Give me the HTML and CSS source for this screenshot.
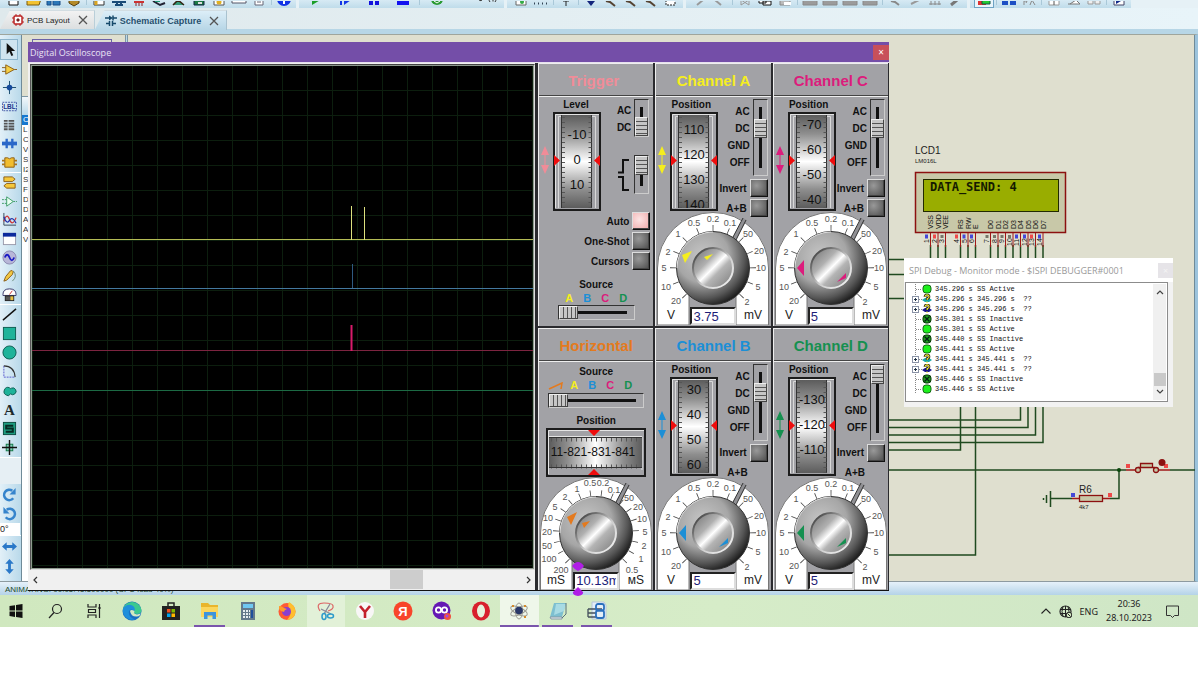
FILE: index.html
```html
<!DOCTYPE html>
<html lang="en">
<head>
<meta charset="utf-8">
<title>Schematic Capture</title>
<link rel="stylesheet" href="styles.css">
</head>
<body>
<svg class="defs" aria-hidden="true">
  <defs>
    <radialGradient id="knobFace" cx="0.36" cy="0.34" r="0.72">
      <stop offset="0" stop-color="#c6c6c6"/><stop offset="0.5" stop-color="#a6a6a6"/><stop offset="0.8" stop-color="#555"/><stop offset="1" stop-color="#141414"/>
    </radialGradient>
    <linearGradient id="knobCap" x1="0" y1="0" x2="1" y2="1">
      <stop offset="0.05" stop-color="#777"/><stop offset="0.35" stop-color="#b0b0b0"/><stop offset="0.5" stop-color="#fff"/><stop offset="0.62" stop-color="#b4b4b4"/><stop offset="0.95" stop-color="#808080"/>
    </linearGradient>
    <linearGradient id="knobRim" x1="0" y1="0" x2="1" y2="1">
      <stop offset="0.1" stop-color="#444"/><stop offset="0.55" stop-color="#ccc"/><stop offset="0.9" stop-color="#eee"/>
    </linearGradient>
    <linearGradient id="drumV" x1="0" y1="0" x2="0" y2="1">
      <stop offset="0" stop-color="#5c5c5c"/><stop offset="0.2" stop-color="#8e8e8e"/><stop offset="0.5" stop-color="#fff"/><stop offset="0.8" stop-color="#8e8e8e"/><stop offset="1" stop-color="#5c5c5c"/>
    </linearGradient>
    <linearGradient id="drumH" x1="0" y1="0" x2="1" y2="0">
      <stop offset="0" stop-color="#5c5c5c"/><stop offset="0.2" stop-color="#8e8e8e"/><stop offset="0.5" stop-color="#fff"/><stop offset="0.8" stop-color="#8e8e8e"/><stop offset="1" stop-color="#5c5c5c"/>
    </linearGradient>
    <symbol id="drum" viewBox="0 0 48 99">
      <rect x="1" y="1" width="46" height="97" fill="#a2a2a6" stroke="#1c1c1c" stroke-width="2"/>
      <path d="M2.500 96V2.500H46" fill="none" stroke="#e4e4e4"/>
      <path d="M5.500 96V4.500H42.500V96" fill="none" stroke="#d8d8d8"/>
      <rect x="8" y="3" width="31" height="93" fill="url(#drumV)"/>
      <path d="M8.500 3V96M38.500 3V96" stroke="#333"/>
      <path d="M10.500 5V96" stroke="#555" stroke-width="3" stroke-dasharray="1 4"/>
      <path d="M37 5V96" stroke="#555" stroke-width="3" stroke-dasharray="1 4"/>
      <path d="M1 43V54L7 48.500Z M47 43V54L41 48.500Z" fill="#f00d0d"/>
    </symbol>
    <symbol id="updown" viewBox="0 0 10 28">
      <path d="M5 0L9 9H1ZM5 28L9 19H1Z" fill="currentColor"/><path d="M5 8V20" stroke="currentColor"/>
    </symbol>
    <symbol id="plate" viewBox="0 0 112 113">
      <path d="M0.500 113V56A55.500 55.500 0 0 1 111.500 56V113H79V82H32V113Z" fill="#fff" stroke="#777"/>
      <path d="M76 29L88 7" stroke="#909094" stroke-width="4"/>
      <path d="M75 27L86 6M78 30L89 8" stroke="#333"/>
    </symbol>
    <symbol id="knob" viewBox="0 0 112 113">
      <circle cx="56" cy="56" r="36.500" fill="url(#knobFace)" stroke="#333"/>
      <path d="M20 56A36 36 0 0 1 56 20" fill="none" stroke="#ddd"/>
      <circle cx="56" cy="56" r="20" fill="url(#knobCap)" stroke="url(#knobRim)" stroke-width="2"/>
    </symbol>
    <symbol id="scale" viewBox="0 0 112 113">
      <path d="M27.700 84.300A40 40 0 1 1 84.300 84.300" pathLength="120" fill="none" stroke="#444" stroke-width="6" stroke-dasharray="0.500 9.460"/>
      <g class="scale-text">
        <text x="19" y="92">20</text><text x="9" y="78">10</text><text x="7" y="59">5</text><text x="11" y="43">2</text><text x="21" y="25">1</text><text x="37" y="14">0.5</text><text x="56" y="10">0.2</text><text x="73" y="14">0.1</text><text x="91" y="25">50</text><text x="102" y="42">20</text><text x="104" y="59">10</text><text x="101" y="78">5</text><text x="90" y="93">2</text>
      </g>
      <text class="unit-text" x="14" y="107">V</text><text class="unit-text" x="96" y="107">mV</text>
    </symbol>
    <symbol id="ptr" viewBox="0 0 112 113">
      <path d="M22 56L29 48V64Z" fill="currentColor"/><path d="M71 66L62 70L71 61Z" fill="currentColor"/>
    </symbol>
    <symbol id="q" viewBox="0 0 10 10">
      <path d="M0 6L3 4H7L10 6L7 8H3Z" fill="currentColor"/><path d="M3 3Q3 .800 5 .800Q7.200 1 7 3Q6.800 4.200 5.200 4.600V6" fill="none" stroke="#111" stroke-width="2.600"/><path d="M3 3Q3 .800 5 .800Q7.200 1 7 3Q6.800 4.200 5.200 4.600V6M5 7.500V9" fill="none" stroke="#f4ea3a" stroke-width="1.200"/>
    </symbol>
    <symbol id="on" viewBox="0 0 10 10"><rect x="1" y="1" width="8" height="8" rx="3" fill="#1cf01c" stroke="#156b15"/></symbol>
    <symbol id="off" viewBox="0 0 10 10"><rect x="1" y="1" width="8" height="8" rx="3" fill="#1f9c1f" stroke="#073807"/><path d="M2.500 2.500L7.500 7.500M7.500 2.500L2.500 7.500" stroke="#021" stroke-width="1.300"/></symbol>
    <symbol id="leaf" viewBox="0 0 12 10"><path d="M5.500 0V10M6 5.500H12" stroke="#888" stroke-dasharray="1 1"/></symbol>
    <symbol id="plus" viewBox="0 0 12 10"><path d="M5.500 0V10M9 5.500H12" stroke="#888" stroke-dasharray="1 1"/><rect x="2.500" y="2.500" width="6" height="6" fill="#fff" stroke="#8a93a6"/><path d="M4 5.500H7M5.500 4V7" stroke="#234"/></symbol>
  </defs>
</svg>

<div class="app">
  <div class="toolbar">
    <div class="tool-group">
      <button aria-label="New"><svg viewBox="0 0 16 6"><path d="M3 -4H12V4H3Z" fill="#fff" stroke="#111"/></svg></button>
      <button aria-label="Open"><svg viewBox="0 0 16 6"><path d="M1 -2H15L13 4H1Z" fill="#f2c230" stroke="#7a5c10"/></svg></button>
      <button aria-label="Save"><svg viewBox="0 0 16 6"><path d="M1 -2V4H5V-2M7 -2V4H14V-2" fill="#2b77b8" stroke="#1b4c86"/></svg></button>
      <button aria-label="Home"><svg viewBox="0 0 16 6"><path d="M3 -2V2L8 5L13 2V-2Z" fill="#b48a28" stroke="#553e10"/></svg></button>
      <i></i>
      <button aria-label="Board"><svg viewBox="0 0 16 6"><path d="M3 -2H13V4H3Z" fill="#fff" stroke="#333"/><path d="M5 0V4" stroke="#d9a520" stroke-width="3"/></svg></button>
      <button aria-label="Schematic"><svg viewBox="0 0 16 6"><path d="M1 1H15M4 4H12M6 0V5M10 0V5" stroke="#1b4c78" stroke-width="2"/></svg></button>
      <button aria-label="Layout"><svg viewBox="0 0 16 6"><path d="M3 -2H13V2H3Z" fill="#c33"/><path d="M5 2V5M8 2V5M11 2V5" stroke="#822" /></svg></button>
      <button aria-label="3D view"><svg viewBox="0 0 16 6"><path d="M2 0L9 4L14 2" fill="none" stroke="#223" stroke-width="2"/><path d="M4 0H9" stroke="#297" stroke-width="2"/></svg></button>
      <button aria-label="Gerber"><svg viewBox="0 0 16 6"><path d="M2 4L7 -1L13 4" fill="#397" stroke="#321" stroke-width="1.500"/></svg></button>
      <button aria-label="Explorer"><svg viewBox="0 0 16 6"><path d="M3 -2H13V4H3Z" fill="#1d7a43" stroke="#124"/><path d="M7 1H11V3H7Z" fill="#ddd"/></svg></button>
      <button aria-label="Bill"><svg viewBox="0 0 16 6"><path d="M3 -2H13V4H3Z" fill="#fff" stroke="#555"/><circle cx="8" cy="1" r="2.500" fill="#e0b020"/></svg></button>
      <button aria-label="Code"><svg viewBox="0 0 16 6"><path d="M1 -2H15V2H1Z" fill="#fff" stroke="#556"/></svg></button>
      <button aria-label="Notes"><svg viewBox="0 0 16 6"><path d="M4 -2H12V4H4Z" fill="#fff" stroke="#667"/><path d="M6 1H10" stroke="#667"/></svg></button>
      <i></i>
      <button aria-label="Help"><svg viewBox="0 0 16 6"><circle cx="8" cy="-2" r="7" fill="#1133e6"/><path d="M8 -2V3" stroke="#fff" stroke-width="2"/></svg></button>
    </div>
    <div class="tool-group wide">
      <button aria-label="Play"><svg viewBox="0 0 16 6"><path d="M4 -4V4L14 -2Z" fill="#1a9e28"/></svg></button>
      <button aria-label="Step"><svg viewBox="0 0 16 6"><path d="M4 -2V4" stroke="#1133e6" stroke-width="2"/><path d="M7 -4V4L14 -1Z" fill="#1133e6"/></svg></button>
      <button aria-label="Pause"><svg viewBox="0 0 16 6"><path d="M5 -2V4M11 -2V4" stroke="#1111dd" stroke-width="4"/></svg></button>
      <button aria-label="Stop"><svg viewBox="0 0 16 6"><path d="M2 -2H14V4H2Z" fill="#1111f0"/></svg></button>
      <i></i>
      <button aria-label="Messages"><svg viewBox="0 0 16 6"><circle cx="8" cy="-2" r="6" fill="#2a9a34"/><path d="M5 0L8 2L11 0" fill="none" stroke="#fff"/></svg></button>
      <svg class="counter" viewBox="0 0 51 6"><path d="M28 0Q30 2 32 -1M38 -1Q38 1 39 2M42 -1V1.500M45 -1Q45 1 44 2" fill="none" stroke="#333"/></svg>
    </div>
    <div class="tool-group">
      <button aria-label="Redraw"><svg viewBox="0 0 16 6"><path d="M3 -2H13V4H3Z" fill="#fff" stroke="#666"/><circle cx="9" cy="1" r="2" fill="#3a4"/></svg></button>
      <button aria-label="Grid"><svg viewBox="0 0 16 6"><path d="M1 2.500H16" stroke="#345" stroke-width="2" stroke-dasharray="1 3"/></svg></button>
      <i></i>
      <button aria-label="Origin"><svg viewBox="0 0 16 6"><path d="M8 -2V5M5 0H11" stroke="#222"/></svg></button>
      <i></i>
      <button aria-label="Pan"><svg viewBox="0 0 16 6"><path d="M4 0H12L8 5Z" fill="#13257c"/></svg></button>
      <button aria-label="Zoom in"><svg viewBox="0 0 16 6"><path d="M3 0L7 1L12 5" fill="none" stroke="#543" stroke-width="2"/></svg></button>
      <button aria-label="Zoom out"><svg viewBox="0 0 16 6"><path d="M3 0L7 1L12 5" fill="none" stroke="#543" stroke-width="2"/></svg></button>
      <button aria-label="Zoom all"><svg viewBox="0 0 16 6"><path d="M3 0L7 1L12 5" fill="none" stroke="#543" stroke-width="2"/></svg></button>
      <button aria-label="Zoom area"><svg viewBox="0 0 16 6"><path d="M3 -2H12V4H3Z" fill="#fff" stroke="#222" stroke-dasharray="2 1"/></svg></button>
    </div>
    <div class="tool-group">
      <button aria-label="Undo"><svg viewBox="0 0 16 6"><path d="M5 4L11 -1" stroke="#999" stroke-width="2"/></svg></button>
      <button aria-label="Redo"><svg viewBox="0 0 16 6"><path d="M3 -1L9 4" stroke="#999" stroke-width="2"/></svg></button>
      <i></i>
      <button aria-label="Cut"><svg viewBox="0 0 16 6"><path d="M4 4L12 -1M4 -1L12 4M4 0V4M12 0V4" stroke="#999"/></svg></button>
      <button aria-label="Copy"><svg viewBox="0 0 16 6"><path d="M2 -2H9V2H2ZM6 0H14V4H6Z" fill="#fff" stroke="#111"/></svg></button>
      <button aria-label="Paste"><svg viewBox="0 0 16 6"><path d="M3 -2H13V4H3Z" fill="#bbb" stroke="#888"/><path d="M7 1H14V4H7Z" fill="#fff"/></svg></button>
      <i></i>
      <button aria-label="Block copy"><svg viewBox="0 0 16 6"><path d="M1 -2H15V4H1Z" fill="#9b9b9b" stroke="#888"/></svg></button>
      <button aria-label="Block move"><svg viewBox="0 0 16 6"><path d="M1 -2H15V4H1Z" fill="#9b9b9b" stroke="#888"/></svg></button>
      <button aria-label="Block rotate"><svg viewBox="0 0 16 6"><path d="M1 -2H15V4H1Z" fill="#9b9b9b" stroke="#888"/></svg></button>
      <button aria-label="Block delete"><svg viewBox="0 0 16 6"><path d="M1 -2H15V4H1Z" fill="#9b9b9b" stroke="#888"/></svg></button>
      <i></i>
      <button aria-label="Pick"><svg viewBox="0 0 16 6"><path d="M4 0L8 1L12 4" fill="none" stroke="#888" stroke-width="2"/></svg></button>
      <button aria-label="Make device"><svg viewBox="0 0 16 6"><path d="M4 3L12 -1" stroke="#999" stroke-width="2"/></svg></button>
      <button aria-label="Packaging"><svg viewBox="0 0 16 6"><path d="M2 3H14M4 0V4M8 0V4M12 0V4" stroke="#888"/></svg></button>
      <button aria-label="Decompose"><svg viewBox="0 0 16 6"><path d="M4 4L10 -1" stroke="#777" stroke-width="3"/></svg></button>
    </div>
    <div class="tool-group">
      <button class="pressed" aria-label="Autorouter"><svg viewBox="0 0 16 6"><path d="M2 -2H10V4H2Z" fill="#d33"/><path d="M6 -2H14V3H6Z" fill="#2c3" stroke="#154"/></svg></button>
      <i></i>
      <button aria-label="Search"><svg viewBox="0 0 16 6"><path d="M1 2H7M9 2H15" stroke="#1d4fc4" stroke-width="4"/></svg></button>
      <button aria-label="Properties"><svg viewBox="0 0 16 6"><path d="M3 4V0H6L5 2M9 4L11 -1L14 4" fill="none" stroke="#888"/></svg></button>
      <i></i>
      <button aria-label="New sheet"><svg viewBox="0 0 16 6"><path d="M3 -2H13V4H3Z" fill="#fff" stroke="#999"/><path d="M8 0V4" stroke="#555"/></svg></button>
      <button aria-label="Remove sheet"><svg viewBox="0 0 16 6"><path d="M2 3H14L10 -1L4 3" fill="#fff" stroke="#777"/></svg></button>
      <button aria-label="Exit to parent"><svg viewBox="0 0 16 6"><path d="M2 -2H7V3H2ZM9 -2H14V3H9Z" fill="#eee" stroke="#999"/></svg></button>
      <i></i>
      <button aria-label="Electrical check"><svg viewBox="0 0 16 6"><path d="M3 -2H13V4H3Z" fill="#fff" stroke="#446"/><path d="M5 -2V3L10 0Z" fill="#112a8a"/></svg></button>
    </div>
  </div>

  <div class="tabs">
    <button class="tab">
      <svg class="tab-icon" viewBox="0 0 12 12"><rect x="2" y="2" width="8" height="8" rx="1" fill="#fff" stroke="#b22" stroke-width="1.500"/><path d="M5 5H7V7H5Z" fill="#722" stroke="#722"/><path d="M4 0V2M8 0V2M4 10V12M8 10V12M0 4H2M0 8H2M10 4H12M10 8H12" stroke="#b22"/></svg>
      PCB Layout
      <svg class="tab-x" viewBox="0 0 10 10"><path d="M1 1L9 9M9 1L1 9" stroke="#555" stroke-width="1.300"/></svg>
    </button>
    <button class="tab active">
      <svg class="tab-icon" viewBox="0 0 12 12"><path d="M0 3H4M8 3H12M1 8.500H4.500M7.500 8.500H11M8 0.500V5.500M4.500 6V11M7.500 6V11" stroke="#174a6b" stroke-width="1.500"/><path d="M4 0.500L8 3L4 5.500Z" fill="#174a6b"/></svg>
      Schematic Capture
      <svg class="tab-x" viewBox="0 0 10 10"><path d="M1 1L9 9M9 1L1 9" stroke="#555" stroke-width="1.300"/></svg>
    </button>
  </div>

  <div class="workspace">
    <div class="palette">
      <div class="pal-group g1">
        <button class="picked" aria-label="Selection"><svg viewBox="0 0 16 16"><path d="M5 1V13L8 10L10 15L12 14L10 9.500H14Z" fill="#111"/></svg></button>
        <button aria-label="Component"><svg viewBox="0 0 16 16"><path d="M4 3V13L13 8Z" fill="#f5cf45" stroke="#8a5d18"/><path d="M0 6H4M0 10H4M13 8H16" stroke="#8a5d18"/></svg></button>
        <button aria-label="Junction"><svg viewBox="0 0 16 16"><path d="M8 1V15M1 8H15" stroke="#174a6b"/><circle cx="8" cy="8" r="3" fill="#154a9c"/></svg></button>
        <button aria-label="Wire label"><svg viewBox="0 0 16 16"><rect x="0.500" y="3.500" width="15" height="9" fill="none" stroke="#4357a8" stroke-dasharray="2 1"/><text class="lbl" x="8" y="11">LBL</text></svg></button>
        <button aria-label="Text script"><svg viewBox="0 0 16 16"><path d="M2 3H14M2 6H14M2 9H14M2 12H14" stroke="#555" stroke-width="2" stroke-dasharray="4 1 6 1"/></svg></button>
        <button aria-label="Bus"><svg viewBox="0 0 16 16"><path d="M0 8H16" stroke="#2b68c8" stroke-width="4"/><path d="M5 3V13M11 3V13" stroke="#2b68c8" stroke-width="2.500"/></svg></button>
        <button aria-label="Subcircuit"><svg viewBox="0 0 16 16"><path d="M3 3H6Q8 5 10 3H13V13H3Z" fill="#f2bd2e" stroke="#8a5d18"/><path d="M0 6H3M0 10H3M13 6H16M13 10H16" stroke="#a8731c" stroke-width="2"/></svg></button>
      </div>
      <div class="pal-group g2">
        <button aria-label="Terminal"><svg viewBox="0 0 16 16"><path d="M2 2H11L14 4.500L11 7H2ZM14 9H5L2 11.500L5 14H14Z" fill="#f5c83c" stroke="#8a5d18"/></svg></button>
        <button aria-label="Device pin"><svg viewBox="0 0 16 16"><path d="M5 3V13L12 8Z" fill="#e8fff2" stroke="#3d9c66"/><path d="M0 6H5M0 10H5M12 8H16" stroke="#3d9c66" stroke-dasharray="2 1"/></svg></button>
        <button aria-label="Graph"><svg viewBox="0 0 16 16"><path d="M2 1V14H15" fill="none" stroke="#345"/><path d="M2 10Q5 0 8 8T15 6" fill="none" stroke="#c33" stroke-width="1.300"/><path d="M2 5Q5 14 8 9T15 12" fill="none" stroke="#23a" stroke-width="1.300"/></svg></button>
        <button aria-label="Active popup"><svg viewBox="0 0 16 16"><rect x="1.500" y="2.500" width="13" height="12" fill="#fff" stroke="#99a"/><path d="M1 2H15V6H1Z" fill="#0c2a9c"/></svg></button>
        <button aria-label="Generator"><svg viewBox="0 0 16 16"><circle cx="8" cy="8" r="7" fill="#b8b6d8" stroke="#8b8bb0"/><path d="M3 8Q5.500 2 8 8T13 8" fill="none" stroke="#1a1ac4" stroke-width="2"/></svg></button>
        <button aria-label="Probe"><svg viewBox="0 0 16 16"><path d="M2 14L4 9L9 3Q11 2 12 4L11 7L5 13Z" fill="#f2c742" stroke="#8a5d18"/><path d="M12 3Q17 9 11 14" fill="none" stroke="#687"/></svg></button>
        <button aria-label="Instruments"><svg viewBox="0 0 16 16"><path d="M1 8Q1 2 8 2T15 8V9H1Z" fill="#fff" stroke="#336"/><path d="M8 8L11 4" stroke="#c33"/><rect x="3.500" y="9.500" width="9" height="5" fill="#555" stroke="#222"/><path d="M9 10H12V14H9Z" fill="#e8c040"/></svg></button>
      </div>
      <div class="pal-group g3">
        <button aria-label="Line"><svg viewBox="0 0 16 16"><path d="M1 14L15 2" stroke="#111" stroke-width="1.500"/></svg></button>
        <button aria-label="Box"><svg viewBox="0 0 16 16"><rect x="1.500" y="1.500" width="13" height="13" fill="#1fb39a" stroke="#0d5c50"/></svg></button>
        <button aria-label="Circle"><svg viewBox="0 0 16 16"><circle cx="8" cy="8" r="7" fill="#1fb39a" stroke="#0d5c50"/></svg></button>
        <button aria-label="Arc"><svg viewBox="0 0 16 16"><path d="M2 2V14H14" fill="none" stroke="#55c" stroke-dasharray="2 1"/><path d="M2 2Q13 2 14 14" fill="none" stroke="#333" stroke-width="1.200"/></svg></button>
        <button aria-label="Path"><svg viewBox="0 0 16 16"><path d="M8 5A4 4 0 1 0 5 13Q7 15 9 11.500A3.600 3.600 0 1 0 10 5.500Q9 7 8 5Z" fill="#1fb39a" stroke="#0d5c50"/></svg></button>
        <button aria-label="Text"><svg viewBox="0 0 16 16"><text class="big-a" x="8" y="14">A</text></svg></button>
        <button aria-label="Symbol"><svg viewBox="0 0 16 16"><rect x="1.500" y="1.500" width="13" height="13" fill="#1d9c80" stroke="#0a4a3e"/><path d="M12 5H4.500V8H11.500V11.500H4" fill="none" stroke="#062b24" stroke-width="2.200"/></svg></button>
        <button aria-label="Marker"><svg viewBox="0 0 16 16"><rect x="4.500" y="4.500" width="7" height="7" fill="#7fc9b6" stroke="#174"/><path d="M8 0V16M0 8H16" stroke="#111" stroke-width="1.500"/></svg></button>
      </div>
      <div class="pal-group g4">
        <button aria-label="Rotate clockwise"><svg viewBox="0 0 16 16"><path d="M12 12A5.500 5.500 0 1 1 11 4" fill="none" stroke="#3684cc" stroke-width="2.800"/><path d="M14.500 1V8H8Z" fill="#3684cc"/></svg></button>
        <button aria-label="Rotate anticlockwise"><svg viewBox="0 0 16 16"><path d="M4 12A5.500 5.500 0 1 0 5 4" fill="none" stroke="#3684cc" stroke-width="2.800"/><path d="M1.500 1V8H8Z" fill="#3684cc"/></svg></button>
        <input class="angle" aria-label="Rotation angle" value="0°">
      </div>
      <div class="pal-group g5">
        <button aria-label="Mirror horizontally"><svg viewBox="0 0 16 16"><path d="M0 8L5 3.500V6.500H11V3.500L16 8L11 12.500V9.500H5V12.500Z" fill="#2a78c8"/></svg></button>
        <button aria-label="Mirror vertically"><svg viewBox="0 0 16 16"><path d="M8 0L12.500 5H9.500V11H12.500L8 16L3.500 11H6.500V5H3.500Z" fill="#2a78c8"/></svg></button>
      </div>
    </div>

    <div class="side">
      <div class="preview"><div class="preview-sheet"></div></div>
      <div class="devices">
        <div class="devices-head"></div>
        <ul><li class="sel">C</li><li>L</li><li>C</li><li>V</li><li>S</li><li>I2</li><li>S</li><li>F</li><li>D</li><li>D</li><li>A</li><li>A</li><li>V</li></ul>
      </div>
    </div>

    <div class="sheet"></div>

    <svg class="schematic" width="1195" height="547" viewBox="0 35 1195 547">
      <g class="wire">
        <path d="M880 259.500H910M880 274.500H910M880 298.500H910"/>
        <path d="M930.500 245V262M938 245V262M945.500 245V262M960.500 245V262M968 245V262M975.500 245V262M990.500 245V262M998 245V262M1005.500 245V262M1013 245V262M1020.500 245V262M1028 245V262M1035.500 245V262M1043 245V262"/>
        <path d="M880 420H1020.500V400M880 427.500H1028V400M880 435H1035.500V400M880 442.500H1043V400M880 450H960.500V400M880 555H975.500V400"/>
        <path d="M880 470H1126M1170 470H1195M1119 470V498.500H1110M1051 498.500H1072"/>
        <path d="M1050.500 491V507M1046.500 495V503M1043.500 498V500"/>
      </g>
      <circle cx="1119" cy="470" r="2" fill="#0b470b"/>
      <rect x="915.500" y="172.500" width="150" height="60" fill="#c8c8a8" stroke="#8c1010" stroke-width="1.500"/>
      <rect x="923.500" y="179.500" width="135" height="32" fill="#99ad00" stroke="#222a00"/>
      <text class="lcd-text" x="930" y="191">DATA_SEND: 4</text>
      <text class="ref" x="915" y="154">LCD1</text>
      <text class="part" x="915" y="163">LM016L</text>
      <g class="pins">
        <text transform="translate(933 229) rotate(-90)">VSS</text><text transform="translate(941 229) rotate(-90)">VDD</text><text transform="translate(948 229) rotate(-90)">VEE</text><text transform="translate(963 229) rotate(-90)">RS</text><text transform="translate(971 229) rotate(-90)">RW</text><text transform="translate(978 229) rotate(-90)">E</text><text transform="translate(993 229) rotate(-90)">D0</text><text transform="translate(1001 229) rotate(-90)">D1</text><text transform="translate(1008 229) rotate(-90)">D2</text><text transform="translate(1016 229) rotate(-90)">D3</text><text transform="translate(1023 229) rotate(-90)">D4</text><text transform="translate(1031 229) rotate(-90)">D5</text><text transform="translate(1038 229) rotate(-90)">D6</text><text transform="translate(1046 229) rotate(-90)">D7</text>
        <text transform="translate(929 243) rotate(-90)">1</text><text transform="translate(937 243) rotate(-90)">2</text><text transform="translate(944 243) rotate(-90)">3</text><text transform="translate(959 243) rotate(-90)">4</text><text transform="translate(967 243) rotate(-90)">5</text><text transform="translate(974 243) rotate(-90)">6</text><text transform="translate(989 243) rotate(-90)">7</text><text transform="translate(997 243) rotate(-90)">8</text><text transform="translate(1004 243) rotate(-90)">9</text><text transform="translate(1012 246) rotate(-90)">10</text><text transform="translate(1019 246) rotate(-90)">11</text><text transform="translate(1027 246) rotate(-90)">12</text><text transform="translate(1034 246) rotate(-90)">13</text><text transform="translate(1042 246) rotate(-90)">14</text>
      </g>
      <path d="M930.500 233V247M938 233V247M945.500 233V247M960.500 233V247M968 233V247M975.500 233V247M990.500 233V247M998 233V247M1005.500 233V247M1013 233V247M1020.500 233V247M1028 233V247M1035.500 233V247M1043 233V247" stroke="#a01818"/>
      <path d="M925 236.500H928M962.500 236.500H965.500M970 236.500H973M1015 236.500H1018M1023 236.500H1026M1038 236.500H1041M1071 495H1075" stroke="#4448d8" stroke-width="4"/>
      <path d="M933 236.500H936M955 236.500H958M1030 236.500H1033M1108 495H1112M1126 466H1130M1164 466H1168" stroke="#ee4a4a" stroke-width="4"/>
      <path d="M940.500 236.500H943.500M985.500 236.500H988.500M993 236.500H996M1000.500 236.500H1003.500M1008 236.500H1011" stroke="#77776a" stroke-width="3"/>
      <g fill="#c8c8a8" stroke="#8c1010" stroke-width="1.300">
        <path d="M1126 470H1135M1159 470H1170M1072 498.500H1079M1103 498.500H1110" stroke="#a01818"/>
        <path d="M1138 467.500H1155M1140.500 467V463.500H1152.500V467"/>
        <circle cx="1138" cy="470" r="2.500"/><circle cx="1156" cy="470" r="2.500"/>
        <rect x="1079.500" y="495.500" width="23" height="6"/>
      </g>
      <circle cx="1162" cy="462.500" r="3.500" fill="#8c1010"/>
      <text class="ref" x="1079" y="493">R6</text>
      <text class="part" x="1079" y="509">4k7</text>
    </svg>
  </div>

  <div class="statusbar"><span>ANIMATING: 00:05:45.500000 (CPU load 40%)</span></div>

  <section class="scope">
    <header class="scope-title"><span>Digital Oscilloscope</span><button aria-label="Close oscilloscope">×</button></header>
    <div class="scope-body">
      <div class="display">
        <div class="screen">
          <svg width="100%" height="502">
            <path d="M0 173.500H2000" stroke="#b4bb55"/><path d="M319.500 140V174M332.500 141V174" stroke="#dde07e"/>
            <path d="M0 222.500H2000" stroke="#44799f"/><path d="M320.500 198V222" stroke="#2f5a80"/>
            <path d="M0 284.500H2000" stroke="#7c2440"/><path d="M319.500 259V285" stroke="#d81b6a" stroke-width="2"/>
            <path d="M0 324.500H2000" stroke="#1c6a44"/>
          </svg>
        </div>
        <div class="hscroll"><button aria-label="Scroll left"><svg viewBox="0 0 8 8"><path d="M5 1L2 4L5 7" fill="none" stroke="#333" stroke-width="1.200"/></svg></button><div class="hscroll-track"><div class="hscroll-thumb"></div></div><button aria-label="Scroll right"><svg viewBox="0 0 8 8"><path d="M3 1L6 4L3 7" fill="none" stroke="#333" stroke-width="1.200"/></svg></button></div>
      </div>

      <div class="panels">
        <section class="panel trigger">
          <h2 class="pink">Trigger</h2>
          <div class="panel-body">
            <div class="upper">
              <div class="gauge"><span class="cap">Level</span><div class="gauge-row pink">
                <svg class="updown"><use href="#updown"/></svg>
                <svg class="drum" viewBox="0 0 48 99"><use href="#drum"/><text x="24" y="27">-10</text><text x="24" y="52">0</text><text x="24" y="77">10</text></svg></div></div>
              <div class="modes">
                <div class="mode-row short"><div class="mode-labels"><span>AC</span><span>DC</span></div><input type="range" class="vslide" aria-label="Trigger coupling" min="0" max="1" value="1"></div>
                <div class="mode-row edge"><svg class="edge-icon" viewBox="0 0 14 36"><path d="M1 15.500H6V3H12M1 20H6V33H12" fill="none" stroke="#111" stroke-width="2"/></svg><input type="range" class="vslide" aria-label="Trigger edge" min="0" max="1" value="0"></div>
              </div>
            </div>
            <div class="trigger-buttons">
              <label for="t1">Auto</label><button id="t1" class="led lit"></button>
              <label for="t2">One-Shot</label><button id="t2" class="led"></button>
              <label for="t3">Cursors</label><button id="t3" class="led"></button>
            </div>
            <div class="source">
              <span class="cap">Source</span>
              <div class="letters"><b class="yellow">A</b><b class="blue">B</b><b class="magenta">C</b><b class="green">D</b></div>
              <input type="range" class="hslide" aria-label="Trigger source" min="0" max="3" value="0">
            </div>
          </div>
        </section>

        <section class="panel">
          <h2 class="yellow">Channel A</h2>
          <div class="panel-body">
            <div class="upper">
              <div class="gauge"><span class="cap">Position</span><div class="gauge-row yellow">
                <svg class="updown"><use href="#updown"/></svg>
                <svg class="drum" viewBox="0 0 48 99"><use href="#drum"/><text x="24" y="22">110</text><text x="24" y="47">120</text><text x="24" y="72">130</text><svg x="8" y="3" width="32" height="93"><text x="16" y="94">140</text></svg></svg></div></div>
              <div class="modes">
                <div class="mode-row"><div class="mode-labels"><span>AC</span><span>DC</span><span>GND</span><span>OFF</span></div><input type="range" class="vslide" aria-label="Channel A coupling" min="0" max="3" value="1"></div>
                <div class="btn-row"><label for="a1">Invert</label><button id="a1" class="led"></button></div>
                <div class="btn-row"><label for="a2">A+B</label><button id="a2" class="led"></button></div>
              </div>
            </div>
            <div class="dial"><svg class="yellow" viewBox="0 0 112 113"><use href="#plate"/><use href="#scale"/><use href="#knob"/><path d="M25 43L35 39L28 51ZM47 45L56 42L50 48Z" fill="currentColor"/></svg><input aria-label="Channel A volts per division" value="3.75"></div>
          </div>
        </section>

        <section class="panel">
          <h2 class="magenta">Channel C</h2>
          <div class="panel-body">
            <div class="upper">
              <div class="gauge"><span class="cap">Position</span><div class="gauge-row magenta">
                <svg class="updown"><use href="#updown"/></svg>
                <svg class="drum" viewBox="0 0 48 99"><use href="#drum"/><text x="24" y="17">-70</text><text x="24" y="42">-60</text><text x="24" y="67">-50</text><text x="24" y="92">-40</text></svg></div></div>
              <div class="modes">
                <div class="mode-row"><div class="mode-labels"><span>AC</span><span>DC</span><span>GND</span><span>OFF</span></div><input type="range" class="vslide" aria-label="Channel C coupling" min="0" max="3" value="1"></div>
                <div class="btn-row"><label for="c1">Invert</label><button id="c1" class="led"></button></div>
                <div class="btn-row"><label for="c2">A+B</label><button id="c2" class="led"></button></div>
              </div>
            </div>
            <div class="dial"><svg class="magenta" viewBox="0 0 112 113"><use href="#plate"/><use href="#scale"/><use href="#knob"/><use href="#ptr"/></svg><input aria-label="Channel C volts per division" value="5"></div>
          </div>
        </section>

        <section class="panel horizontal">
          <h2 class="orange">Horizontal</h2>
          <div class="panel-body">
            <div class="source">
              <span class="cap">Source</span>
              <div class="letters"><svg class="ramp orange" viewBox="0 0 16 8"><path d="M1 7L14 1L13 7" fill="none" stroke="currentColor" stroke-width="1.500"/></svg><b class="yellow">A</b><b class="blue">B</b><b class="magenta">C</b><b class="green">D</b></div>
              <input type="range" class="hslide" aria-label="Horizontal source" min="0" max="4" value="0">
            </div>
            <div class="hgauge">
              <span class="cap">Position</span>
              <svg class="hdrum" viewBox="0 0 100 49"><rect x="1" y="1" width="98" height="47" fill="#a2a2a6" stroke="#1c1c1c" stroke-width="2"/><path d="M2.500 46V2.500H98" fill="none" stroke="#e4e4e4"/><path d="M3 8.500H96V42" fill="none" stroke="#e4e4e4"/><rect x="3" y="9" width="93" height="31" fill="url(#drumH)"/><path d="M5 11.500H94M5 38.500H94" stroke="#555" stroke-width="4" stroke-dasharray="1 4"/><path d="M3 9.500H96M3 39.500H96" stroke="#333"/><path d="M42 2H54L48 8ZM42 47H54L48 41Z" fill="#f00d0d"/><text x="47" y="28">11-821-831-841</text></svg>
            </div>
            <div class="dial"><svg class="orange" viewBox="0 0 112 113"><use href="#plate"/><path d="M27.700 84.300A40 40 0 1 1 84.300 84.300" pathLength="170" fill="none" stroke="#444" stroke-width="6" stroke-dasharray="0.700 9.250"/>
              <g class="scale-text"><text x="21" y="96">200</text><text x="9" y="85">100</text><text x="7" y="72">50</text><text x="7" y="58">20</text><text x="8" y="44">10</text><text x="15" y="33">5</text><text x="25" y="23">2</text><text x="37" y="15">1</text><text x="50" y="9">0.5</text><text x="63" y="9">0.2</text><text x="74" y="16">0.1</text><text x="89" y="24">50</text><text x="98" y="33">20</text><text x="102" y="45">10</text><text x="105" y="58">5</text><text x="104" y="72">2</text><text x="101" y="85">1</text><text x="92" y="96">0.5</text></g>
              <text class="unit-text" x="16" y="107">mS</text><text class="unit-text" x="96" y="107">мS</text>
              <use href="#knob"/><path d="M27 40L37 35L31 48ZM42 46L50 44L44 51Z" fill="currentColor"/></svg><input aria-label="Time per division" value="10.13m"></div>
          </div>
        </section>

        <section class="panel">
          <h2 class="blue">Channel B</h2>
          <div class="panel-body">
            <div class="upper">
              <div class="gauge"><span class="cap">Position</span><div class="gauge-row blue">
                <svg class="updown"><use href="#updown"/></svg>
                <svg class="drum" viewBox="0 0 48 99"><use href="#drum"/><text x="24" y="17">30</text><text x="24" y="42">40</text><text x="24" y="67">50</text><text x="24" y="92">60</text></svg></div></div>
              <div class="modes">
                <div class="mode-row"><div class="mode-labels"><span>AC</span><span>DC</span><span>GND</span><span>OFF</span></div><input type="range" class="vslide" aria-label="Channel B coupling" min="0" max="3" value="1"></div>
                <div class="btn-row"><label for="b1">Invert</label><button id="b1" class="led"></button></div>
                <div class="btn-row bare"><span>A+B</span></div>
              </div>
            </div>
            <div class="dial"><svg class="blue" viewBox="0 0 112 113"><use href="#plate"/><use href="#scale"/><use href="#knob"/><use href="#ptr"/></svg><input aria-label="Channel B volts per division" value="5"></div>
          </div>
        </section>

        <section class="panel">
          <h2 class="green">Channel D</h2>
          <div class="panel-body">
            <div class="upper">
              <div class="gauge"><span class="cap">Position</span><div class="gauge-row green">
                <svg class="updown"><use href="#updown"/></svg>
                <svg class="drum" viewBox="0 0 48 99"><use href="#drum"/><text x="24" y="27">-130</text><text x="24" y="52">-120</text><text x="24" y="77">-110</text></svg></div></div>
              <div class="modes">
                <div class="mode-row"><div class="mode-labels"><span>AC</span><span>DC</span><span>GND</span><span>OFF</span></div><input type="range" class="vslide" aria-label="Channel D coupling" min="0" max="3" value="0"></div>
                <div class="btn-row"><label for="d1">Invert</label><button id="d1" class="led"></button></div>
                <div class="btn-row bare"><span>A+B</span></div>
              </div>
            </div>
            <div class="dial"><svg class="green" viewBox="0 0 112 113"><use href="#plate"/><use href="#scale"/><use href="#knob"/><use href="#ptr"/></svg><input aria-label="Channel D volts per division" value="5"></div>
          </div>
        </section>
      </div>
    </div>
    <svg class="handles" viewBox="0 0 12 34"><path d="M0 4Q6 -4 12 4Q10 7 6 9Q2 7 0 4ZM6 25L11 30Q12 33 6 34Q0 33 1 30Z" fill="#b01ee6"/></svg>
  </section>

  <section class="spi">
    <header class="spi-title"><span>SPI Debug - Monitor mode - $ISPI DEBUGGER#0001</span><button aria-label="Close debugger">×</button></header>
    <div class="spi-body">
      <ul class="tree">
        <li><svg class="tw"><use href="#leaf"/></svg><svg class="ti"><use href="#on"/></svg><span>345.296 s SS Active</span></li>
        <li><svg class="tw"><use href="#plus"/></svg><svg class="ti teal"><use href="#q"/></svg><span>345.296 s 345.296 s  ??</span></li>
        <li><svg class="tw"><use href="#plus"/></svg><svg class="ti navy"><use href="#q"/></svg><span>345.296 s 345.296 s  ??</span></li>
        <li><svg class="tw"><use href="#leaf"/></svg><svg class="ti"><use href="#off"/></svg><span>345.301 s SS Inactive</span></li>
        <li><svg class="tw"><use href="#leaf"/></svg><svg class="ti"><use href="#on"/></svg><span>345.301 s SS Active</span></li>
        <li><svg class="tw"><use href="#leaf"/></svg><svg class="ti"><use href="#off"/></svg><span>345.440 s SS Inactive</span></li>
        <li><svg class="tw"><use href="#leaf"/></svg><svg class="ti"><use href="#on"/></svg><span>345.441 s SS Active</span></li>
        <li><svg class="tw"><use href="#plus"/></svg><svg class="ti teal"><use href="#q"/></svg><span>345.441 s 345.441 s  ??</span></li>
        <li><svg class="tw"><use href="#plus"/></svg><svg class="ti navy"><use href="#q"/></svg><span>345.441 s 345.441 s  ??</span></li>
        <li><svg class="tw"><use href="#leaf"/></svg><svg class="ti"><use href="#off"/></svg><span>345.446 s SS Inactive</span></li>
        <li><svg class="tw"><use href="#leaf"/></svg><svg class="ti"><use href="#on"/></svg><span>345.446 s SS Active</span></li>
      </ul>
      <div class="vscroll"><svg viewBox="0 0 8 8"><path d="M1 6L4 3L7 6" fill="none" stroke="#444" stroke-width="1.200"/></svg><div class="vscroll-thumb"></div><svg viewBox="0 0 8 8"><path d="M1 2L4 5L7 2" fill="none" stroke="#444" stroke-width="1.200"/></svg></div>
    </div>
  </section>
</div>

<nav class="taskbar">
  <div class="apps">
    <button aria-label="Start"><svg viewBox="0 0 20 20"><path d="M3.500 5L9 4.200V9.600H3.500ZM10 4L16.500 3V9.600H10ZM3.500 10.500H9V15.900L3.500 15ZM10 10.500H16.500V17L10 16Z" fill="#111"/></svg></button>
    <button aria-label="Search"><svg viewBox="0 0 20 20"><circle cx="12" cy="8" r="4.500" fill="none" stroke="#222" stroke-width="1.200"/><path d="M9 11.500L4 17" stroke="#222" stroke-width="1.200"/></svg></button>
    <button aria-label="Task view"><svg viewBox="0 0 20 20"><path d="M4 3V6H12V3M4 17V14H12V17M4.500 8.500H11.500V11.500H4.500ZM15.500 3V17M14 7H17" fill="none" stroke="#222" stroke-width="1.200"/></svg></button>
    <button aria-label="Edge"><svg viewBox="0 0 20 20"><circle cx="10" cy="10" r="9.500" fill="#1b6fc2"/><path d="M1 8A9.500 9.500 0 0 1 19.500 9Q19.500 13 15 13Q11 13 12 10Q11 5 6 6Q2.500 7 1 8Z" fill="#3cc98f"/><path d="M1 8Q4 3 9 4Q14 6 12.500 10Q9 7 7 10Q6 16 13 18.500A9.500 9.500 0 0 1 1 8Z" fill="#1f8fdb"/><path d="M8 10Q9 8 12.500 10Q11 13 15 13.500L19 12.500Q18 15 15 15.500Q9 16 8 10Z" fill="#d3e9c2"/></svg></button>
    <button aria-label="Store"><svg viewBox="0 0 20 20"><path d="M7 5V2H13V5" fill="none" stroke="#222" stroke-width="1.500"/><path d="M1 5H19V19H1Z" fill="#222"/><path d="M6 8H9.500V11.500H6Z" fill="#f25022"/><path d="M10.500 8H14V11.500H10.500Z" fill="#7fba00"/><path d="M6 12.500H9.500V16H6Z" fill="#00a4ef"/><path d="M10.500 12.500H14V16H10.500Z" fill="#ffb900"/></svg></button>
    <button class="running" aria-label="File Explorer"><svg viewBox="0 0 20 20"><path d="M1 2H8L10 4H18V16H1Z" fill="#e9b52c"/><path d="M1 6H18V16H1Z" fill="#fbd65c"/><path d="M4 18V11H16V18H12.500V14.500H7.500V18Z" fill="#3d94dc"/></svg></button>
    <button aria-label="Calculator"><svg viewBox="0 0 20 20"><rect x="3" y="1" width="14" height="18" fill="#63798c"/><path d="M5 3H15V7H5Z" fill="#6fc8f2"/><path d="M5 10H12M5 13H12M5 16H12" stroke="#e6edf2" stroke-width="2" stroke-dasharray="2 1"/><path d="M13 9H15V17H13Z" fill="#1e4f9c"/></svg></button>
    <button aria-label="Firefox"><svg viewBox="0 0 20 20"><circle cx="10" cy="10.500" r="8.500" fill="#ff5a36"/><path d="M12 1Q19 5 18.500 12Q17 18 10 19Q15 14 13 8Q10 5 12 1Z" fill="#ffbe2e"/><circle cx="9.500" cy="10.500" r="4.500" fill="#8a3fd1"/><path d="M2 5Q5 5 7 7L10 8Q7 9 7 11Q4 11 2 8Z" fill="#ff9a2a"/></svg></button>
    <button class="soft" aria-label="Snipping tool"><svg viewBox="0 0 20 20"><path d="M4 10Q-1 2 8 2T17 5Q18 8 12 10" fill="none" stroke="#d66" stroke-width="1.200"/><path d="M14 3L8 13M5 8L15 13" stroke="#889" stroke-width="1.300"/><ellipse cx="8" cy="15.500" rx="2" ry="3" fill="none" stroke="#2b9acb" stroke-width="1.500"/><ellipse cx="14.500" cy="15" rx="3" ry="2" fill="none" stroke="#2b9acb" stroke-width="1.500"/></svg></button>
    <button aria-label="Yandex Browser"><svg viewBox="0 0 20 20"><circle cx="10" cy="10" r="9" fill="#f8f6f6"/><path d="M5 5L10 11L15 5M10 10V17" fill="none" stroke="#c4202c" stroke-width="2.600"/></svg></button>
    <button aria-label="Yandex"><svg viewBox="0 0 20 20"><circle cx="10" cy="10" r="9.500" fill="#f8452a"/><text class="ya" x="10" y="15">Я</text></svg></button>
    <button aria-label="Media"><svg viewBox="0 0 20 20"><circle cx="9.500" cy="9.500" r="9" fill="#6518b4"/><circle cx="6.500" cy="9" r="2.600" fill="none" stroke="#fff" stroke-width="1.800"/><circle cx="12.500" cy="9" r="2.600" fill="none" stroke="#fff" stroke-width="1.800"/><circle cx="15.500" cy="15.500" r="3.500" fill="#f0503c"/><circle cx="15" cy="15" r="1.500" fill="#a445e0"/></svg></button>
    <button aria-label="Opera"><svg viewBox="0 0 20 20"><ellipse cx="10" cy="10" rx="9" ry="9.500" fill="#d81f2c"/><ellipse cx="10" cy="10" rx="4" ry="6.500" fill="#e6f2dc"/></svg></button>
    <button class="current running" aria-label="Proteus"><svg viewBox="0 0 20 20"><g fill="none" stroke="#9c9c94"><ellipse cx="10" cy="10" rx="9" ry="3.500" transform="rotate(25 10 10)"/><ellipse cx="10" cy="10" rx="9" ry="3.500" transform="rotate(-25 10 10)"/><ellipse cx="10" cy="10" rx="3.500" ry="8"/></g><circle cx="10" cy="9.500" r="3.800" fill="#2a3868"/><path d="M3 5H5M15 16H17M15 5H17" stroke="#d58a2a" stroke-width="2"/></svg></button>
    <button class="running" aria-label="Notepad"><svg viewBox="0 0 20 20"><path d="M6 2H18L14 16H2Z" fill="#7dbfd0"/><path d="M8 3H18L16 10L6 14Z" fill="#a8dbe4"/><path d="M2 16H14V18H3Z" fill="#e4edf0" stroke="#8899a4"/><path d="M18 2V13L14 17" fill="none" stroke="#56717c"/></svg></button>
    <button class="running" aria-label="Virtual machine"><svg viewBox="0 0 20 20"><path d="M5 1H17L19 4V18H5Z" fill="#e4eef8" stroke="#b7c6d8"/><path d="M1 8H15M1 12H9M1 16H9M1 8V16" fill="none" stroke="#44505c" stroke-width="1.300"/><rect x="9" y="3" width="8" height="6.500" rx="2" fill="none" stroke="#2a70bd" stroke-width="1.800"/><rect x="9" y="9.500" width="8" height="7.500" rx="2" fill="none" stroke="#2a70bd" stroke-width="1.800"/></svg></button>
  </div>
  <div class="tray">
    <button aria-label="Show hidden icons"><svg class="s10" viewBox="0 0 10 10"><path d="M0.500 7.500L5 3L9.500 7.500" fill="none" stroke="#222" stroke-width="1.100"/></svg></button>
    <button aria-label="Network"><svg class="s13" viewBox="0 0 13 13"><circle cx="6.500" cy="6.500" r="5.500" fill="none" stroke="#222" stroke-width="1.200"/><path d="M1 4.500H12M1 8.500H12M6.500 1V12M4 1.500Q2 6.500 4 11.500M9 1.500Q11 6.500 9 11.500" fill="none" stroke="#222"/><circle cx="10" cy="10" r="2.800" fill="#d3e9c2" stroke="#222"/><path d="M8.500 8.500L11.500 11.500" stroke="#222"/></svg></button>
    <button class="lang">ENG</button>
    <div class="clock"><time>20:36</time><time>28.10.2023</time></div>
    <button aria-label="Notifications"><svg class="s13" viewBox="0 0 13 13"><path d="M0.500 1H12.500V10.500H8.500L6.500 12.500L4.500 10.500H0.500Z" fill="none" stroke="#333"/></svg></button>
  </div>
</nav>
</body>
</html>
```

FILE: styles.css
```css
* { box-sizing: border-box; }
body { margin: 0; background: #fff; font-family: "Liberation Sans", Arial, sans-serif; font-size: 10px; color: #111; }
button { border: 0; padding: 0; margin: 0; background: none; font: inherit; color: inherit; }
svg { display: block; flex: none; }
ul { list-style: none; margin: 0; padding: 0; }
.defs { position: absolute; width: 0; height: 0; }

.pink { color: #f08c98; }
.yellow { color: #f5ee1e; }
.blue { color: #1c8fd6; }
.magenta { color: #dc1c7c; }
.green { color: #159050; }
.orange { color: #e47a1e; }

.app { position: relative; margin-right: 2px; background: #bcd9ea; }

/* toolbar */
.toolbar { display: flex; gap: 3px; height: 8px; overflow: hidden; background: #e6f1f6; }
.tool-group { display: flex; align-items: flex-start; height: 8px; padding: 0 2px 0 4px; background: linear-gradient(#d7eaf4, #bfdcea); }
.tool-group button { width: 20px; height: 8px; flex: none; }
.tool-group button svg { width: 16px; height: 6px; margin: 0 auto; }
.tool-group i { width: 1px; height: 5px; margin: 0 2px; background: #a9c8d8; }
.tool-group.wide { padding-left: 2px; }
.tool-group.wide button { width: 29px; }
.counter { width: 51px; height: 6px; }
.tool-group .pressed { background: #eaf5fb; border: 1px solid #6ea3c4; border-top: 0; }

/* document tabs */
.tabs { display: flex; height: 26px; padding-top: 2px; background: linear-gradient(90deg, #dfe9ec, #e8f4f9); border-bottom: 5px solid #b7d6e6; }
.tab { display: flex; align-items: center; gap: 3px; height: 19px; padding: 0 6px 0 12px; font-size: 8px; color: #222; background: linear-gradient(#f2f2f2, #dcdfe0); border-right: 1px solid #a9c2cf; border-top: 1px solid #d2dde2; clip-path: polygon(10px 0, 100% 0, 100% 100%, 0 100%); }
.tab.active { padding: 0 7px 0 10px; height: 20px; font-size: 9px; font-weight: bold; color: #27506e; background: linear-gradient(#dceef8, #b7d6e6); }
.tab-icon { width: 12px; height: 12px; }
.tab-x { width: 10px; height: 10px; margin-left: 5px; }

/* workspace */
.workspace { position: relative; display: flex; min-height: 548px; border-top: 1px solid #9fa59c; border-right: 3px solid #9cc3dc; border-bottom: 1px solid #8d9aa0; }
.palette { width: 21px; flex: none; padding-top: 4px; background: linear-gradient(90deg, #e2f0f8, #b9d9ea); }
.pal-group { display: flex; flex-direction: column; border-bottom: 1px solid #fff; }
.pal-group button { flex: 1; width: 18px; display: flex; align-items: center; justify-content: center; }
.pal-group svg { width: 15px; height: 15px; }
.pal-group .picked { background: #cfe4f0; border: 1px solid #8cb4cc; }
.g1 { height: 134px; }
.g2 { height: 132px; }
.g3 { height: 153px; }
.g4 { height: 78px; padding-top: 27px; background: linear-gradient(#e6eff4 26px, transparent 26px); }
.g5 { height: 40px; border-bottom: 0; }
.g4 .angle { width: 20px; height: 12px; padding: 0; border: 0; background: #fff; font: 9px "Liberation Sans", Arial, sans-serif; color: #222; }
.lbl { font: bold 7px "Liberation Sans", Arial, sans-serif; fill: #23348c; text-anchor: middle; }
.big-a { font: bold 16px "Liberation Serif", "Times New Roman", serif; text-anchor: middle; fill: #1c2a2c; }
.side { display: flex; flex-direction: column; width: 105px; flex: none; border-left: 1px solid #6f8a98; border-right: 1px solid #7d97a5; background: #dfdfcf; }
.preview { height: 61px; padding: 4px 13px 0 10px; }
.preview-sheet { height: 50px; border: 1px solid #6a62a8; }
.devices { flex: 1; background: #fff; border-top: 1px solid #7d97a5; }
.devices-head { height: 18px; background: linear-gradient(#f3f8fb, #b9d9ea); }
.devices li { height: 10px; padding-left: 1px; line-height: 10px; font-size: 8px; color: #333; }
.devices .sel { background: #1677cf; color: #fff; }
.sheet { flex: 1; margin-left: 1px; background: #dfdfcf; border-left: 1px solid #7d97a5; border-right: 1px solid #6f8a98; }
.schematic { position: absolute; left: 0; top: 0; }
.wire { fill: none; stroke: #1f4a1f; stroke-width: 1.500; }
.lcd-text { font: bold 12px "DejaVu Sans Mono", monospace; fill: #141a00; white-space: pre; }
.ref { font-size: 10px; fill: #222; }
.part { font-size: 6px; fill: #222; }
.pins text { font-size: 7px; fill: #111; }

.statusbar { height: 13px; overflow: hidden; padding-left: 5px; background: linear-gradient(#e6f1fa, #b4d3e8); }
.statusbar span { display: block; font-size: 8px; line-height: 15px; color: #244a2a; }

/* oscilloscope window */
.scope { position: absolute; left: 28px; top: 42px; width: 861px; }
.scope-title { display: flex; align-items: center; justify-content: space-between; height: 20px; padding: 0 0 0 2px; background: #744ea8; color: #e9e2f4; font: 9px "Open Sans", "Noto Sans", sans-serif; }
.scope-title button { width: 16px; height: 15px; background: #c8505a; color: #fff; font-size: 10px; line-height: 14px; }
.scope-body { display: flex; height: 529px; background: #2a2a2e; border-top: 1px solid #e6e0ee; border-bottom: 1px solid #111; }
.display { flex: 1; min-width: 0; display: flex; flex-direction: column; background: #f0f0f0; }
.screen { flex: 1; margin: 1px 0 0 2px; border: 2px solid; border-color: #444 #ddd #ddd #555; outline: 1px solid #8f9a8f; outline-offset: -2px; overflow: hidden; background: linear-gradient(90deg, transparent 24px, #0c1e0e 24px) 1px 0 / 25px 25px, linear-gradient(transparent 24px, #0c1e0e 24px) 0 0 / 25px 25px, #000; }
.hscroll { display: flex; height: 20px; }
.hscroll button { width: 15px; display: flex; align-items: center; justify-content: center; }
.hscroll svg { width: 8px; height: 8px; }
.hscroll-track { flex: 1; display: flex; justify-content: flex-end; padding-right: 97px; }
.hscroll-thumb { width: 33px; height: 19px; background: #cdcdcd; }

.panels { display: grid; grid-template-columns: repeat(3, 1fr); grid-template-rows: 1fr 1fr; gap: 2px; width: 353px; margin-left: 1px; padding: 0 1px 0 2px; }
.panel { display: flex; flex-direction: column; min-width: 0; background: #a2a2a6; border-top: 1px solid #eee; border-left: 1px solid #eee; }
.panel h2 { height: 32px; margin: 0; font-size: 15px; line-height: 33px; font-weight: bold; text-align: center; border-bottom: 1px solid #444; flex: none; }
.trigger h2 { padding-right: 5px; }
.panel-body { flex: 1; min-height: 0; border-top: 1px solid #eee; font-weight: bold; }
.upper { display: flex; height: 115px; }
.gauge { width: 62px; flex: none; }
.cap { display: block; height: 15px; line-height: 15px; text-align: center; }
.gauge .cap { padding-left: 8px; }
.gauge-row { display: flex; align-items: flex-start; gap: 3px; padding-left: 1px; }
.updown { width: 10px; height: 28px; margin-top: 34px; }
.drum { width: 48px; height: 99px; }
.drum text { font-size: 13px; font-weight: normal; text-anchor: middle; fill: #111; }
.modes { flex: 1; min-width: 0; padding: 2px 3px 0 0; }
.mode-row { display: flex; justify-content: flex-end; gap: 3px; height: 77px; margin-bottom: 3px; }
.mode-labels { display: flex; flex-direction: column; padding-top: 4px; text-align: right; line-height: 17px; }
.btn-row { display: flex; justify-content: flex-end; align-items: center; gap: 3px; height: 18px; margin-bottom: 2px; white-space: nowrap; }
.bare { padding-right: 20px; }
.led { width: 18px; height: 18px; flex: none; border: 1px solid; border-color: #ddd #111 #111 #ddd; box-shadow: inset -1px -1px 0 #444; background: radial-gradient(circle at 35% 35%, #999, #4a4a4a); }
.led.lit { background: radial-gradient(circle at 40% 40%, #fce4e4, #f0a8a8); }

input[type="range"] { appearance: none; -webkit-appearance: none; margin: 0; flex: none; border: 1px solid; border-color: #333 #ccc #ccc #333; }
.vslide { writing-mode: vertical-lr; width: 15px; height: 100%; background: linear-gradient(#111, #111) center / 3px calc(100% - 14px) no-repeat; }
.hslide { width: 77px; height: 15px; background: linear-gradient(#111, #111) center / calc(100% - 14px) 3px no-repeat; }
.vslide::-webkit-slider-thumb { -webkit-appearance: none; width: 13px; height: 19px; border: 1px solid; border-color: #eee #444 #444 #eee; background: repeating-linear-gradient(#c6c6c6 0 3px, #555 3px 4px); }
.hslide::-webkit-slider-thumb { -webkit-appearance: none; width: 19px; height: 13px; border: 1px solid; border-color: #eee #444 #444 #eee; background: repeating-linear-gradient(90deg, #c6c6c6 0 3px, #555 3px 4px); }

.mode-row.short { height: 38px; margin-bottom: 18px; }
.short .mode-labels { padding-top: 3px; }
.mode-row.edge { height: 39px; }
.edge-icon { width: 14px; height: 36px; margin-top: 2px; }
.trigger .cap { padding-left: 12px; }
.trigger .modes { padding-right: 4px; }
.trigger-buttons { display: grid; grid-template-columns: 1fr 18px; grid-auto-rows: 18px; gap: 2px 3px; align-items: center; padding-right: 3px; text-align: right; }
.source { display: flex; flex-direction: column; align-items: center; }
.source .cap { height: 14px; line-height: 14px; padding: 0; }
.trigger .source { padding-top: 8px; }
.trigger .source .cap { padding: 0; }
.letters { display: flex; height: 13px; font-size: 11px; line-height: 13px; }
.letters b, .letters svg { width: 18px; text-align: center; }
.ramp { height: 8px; margin-top: 3px; }
.horizontal .letters { padding-right: 8px; height: 14px; }
.horizontal .source { padding-top: 3px; }
.horizontal .hslide { width: 96px; }
.hgauge { display: flex; flex-direction: column; align-items: center; padding-top: 5px; height: 69px; }
.hdrum { width: 100px; height: 49px; }
.hdrum text { font-size: 12px; font-weight: normal; text-anchor: middle; fill: #111; }

.dial { display: grid; width: 112px; margin: 0 auto; font-weight: normal; }
.dial > svg, .dial > input { grid-area: 1 / 1; }
.dial > svg { width: 112px; height: 113px; }
.dial > input { align-self: end; justify-self: center; width: 46px; height: 18px; padding: 0 1px; border: 2px solid; border-color: #222 #ddd #ddd #222; background: #fff; color: #1d1d78; font: 13px "Liberation Sans", Arial, sans-serif; }
.scale-text { font-size: 9px; font-weight: normal; fill: #555; text-anchor: middle; }
.unit-text { font-size: 12px; font-weight: normal; fill: #222; text-anchor: middle; }
.handles { position: absolute; left: 544px; top: 520px; width: 12px; height: 34px; }

/* SPI debugger window */
.spi { position: absolute; left: 904px; top: 258px; width: 269px; padding: 0 5px 5px 1px; background: #f2f2f2; }
.spi-title { display: flex; align-items: center; justify-content: space-between; height: 24px; margin: 0 -5px 0 -1px; padding-left: 5px; background: #fff; color: #999; font: 9px "Open Sans", "Noto Sans", sans-serif; white-space: nowrap; }
.spi-title button { width: 15px; height: 15px; background: #e6e4e8; color: #f4f4f4; }
.spi-body { display: flex; justify-content: space-between; height: 120px; padding: 1px 1px 1px 4px; background: #fff; border: 1px solid #8c8c8c; }
.tree li { display: flex; align-items: center; height: 10px; font: 7px "Liberation Mono", "Courier New", monospace; white-space: pre; color: #111; }
.tw { width: 12px; height: 10px; }
.ti { width: 10px; height: 10px; margin-right: 3px; }
.teal { color: #1ba8a8; }
.navy { color: #16168c; }
.vscroll { display: flex; flex-direction: column; align-items: center; width: 13px; padding: 4px 0; background: #f0f0f0; }
.vscroll svg { width: 8px; height: 8px; }
.vscroll-thumb { width: 12px; height: 13px; margin-top: auto; margin-bottom: 2px; background: #c9c9c9; }

/* taskbar */
.taskbar { display: flex; justify-content: space-between; height: 32px; margin-right: 2px; background: linear-gradient(90deg, #d0e8bf, #d6ecc8 60%, #cfe6c6); }
.apps { display: grid; grid-template-columns: repeat(16, 1fr); width: 619px; margin-left: -3px; }
.apps button { display: flex; align-items: center; justify-content: center; }
.apps svg { width: 20px; height: 20px; }
.apps .running { background: linear-gradient(#7a55ac, #7a55ac) center bottom / 31px 2px no-repeat; }
.apps .soft { background: #e2f1d8; }
.apps .current { background: linear-gradient(#7a55ac, #7a55ac) center bottom / 100% 2px no-repeat, #eff7ea; }
.ya { font: bold 13px "Liberation Sans", Arial, sans-serif; fill: #fff; text-anchor: middle; }
.tray { display: flex; align-items: center; gap: 8px; padding-right: 19px; font: 9px "Noto Sans", sans-serif; color: #222; }
.s10 { width: 10px; height: 10px; }
.s13 { width: 13px; height: 13px; }
.clock { display: flex; flex-direction: column; align-items: center; line-height: 14px; }
.tray > :last-child { margin-left: 6px; }
```
